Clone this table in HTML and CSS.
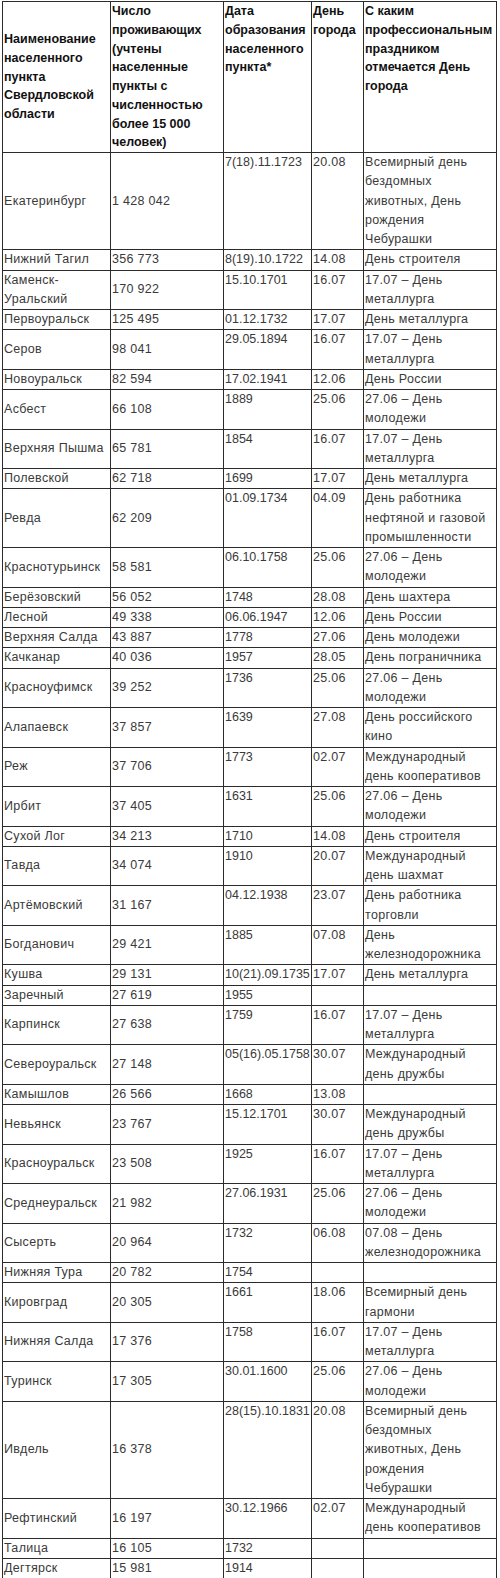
FILE: index.html
```html
<!DOCTYPE html>
<html lang="ru">
<head>
<meta charset="utf-8">
<title>Города Свердловской области</title>
<link rel="stylesheet" href="styles.css">
</head>
<body>
<table class="towns">
<colgroup>
<col class="c-name"><col class="c-pop"><col class="c-date"><col class="c-day"><col class="c-holiday">
</colgroup>
<thead>
<tr>
<th class="mid">Наименование населенного пункта Свердловской области</th>
<th>Число проживающих (учтены населенные пункты с численностью более 15 000 человек)</th>
<th>Дата образования населенного пункта*</th>
<th>День города</th>
<th>С каким профессиональным праздником отмечается День города</th>
</tr>
</thead>
<tbody>
<tr><td>Екатеринбург</td><td>1 428 042</td><td>7(18).11.1723</td><td>20.08</td><td>Всемирный день бездомных животных, День рождения Чебурашки</td></tr>
<tr><td>Нижний Тагил</td><td>356 773</td><td>8(19).10.1722</td><td>14.08</td><td>День строителя</td></tr>
<tr><td>Каменск-Уральский</td><td>170 922</td><td>15.10.1701</td><td>16.07</td><td>17.07 – День металлурга</td></tr>
<tr><td>Первоуральск</td><td>125 495</td><td>01.12.1732</td><td>17.07</td><td>День металлурга</td></tr>
<tr><td>Серов</td><td>98 041</td><td>29.05.1894</td><td>16.07</td><td>17.07 – День металлурга</td></tr>
<tr><td>Новоуральск</td><td>82 594</td><td>17.02.1941</td><td>12.06</td><td>День России</td></tr>
<tr><td>Асбест</td><td>66 108</td><td>1889</td><td>25.06</td><td>27.06 – День молодежи</td></tr>
<tr><td>Верхняя Пышма</td><td>65 781</td><td>1854</td><td>16.07</td><td>17.07 – День металлурга</td></tr>
<tr><td>Полевской</td><td>62 718</td><td>1699</td><td>17.07</td><td>День металлурга</td></tr>
<tr><td>Ревда</td><td>62 209</td><td>01.09.1734</td><td>04.09</td><td>День работника нефтяной и газовой промышленности</td></tr>
<tr><td>Краснотурьинск</td><td>58 581</td><td>06.10.1758</td><td>25.06</td><td>27.06 – День молодежи</td></tr>
<tr><td>Берёзовский</td><td>56 052</td><td>1748</td><td>28.08</td><td>День шахтера</td></tr>
<tr><td>Лесной</td><td>49 338</td><td>06.06.1947</td><td>12.06</td><td>День России</td></tr>
<tr><td>Верхняя Салда</td><td>43 887</td><td>1778</td><td>27.06</td><td>День молодежи</td></tr>
<tr><td>Качканар</td><td>40 036</td><td>1957</td><td>28.05</td><td>День пограничника</td></tr>
<tr><td>Красноуфимск</td><td>39 252</td><td>1736</td><td>25.06</td><td>27.06 – День молодежи</td></tr>
<tr><td>Алапаевск</td><td>37 857</td><td>1639</td><td>27.08</td><td>День российского кино</td></tr>
<tr><td>Реж</td><td>37 706</td><td>1773</td><td>02.07</td><td>Международный день кооперативов</td></tr>
<tr><td>Ирбит</td><td>37 405</td><td>1631</td><td>25.06</td><td>27.06 – День молодежи</td></tr>
<tr><td>Сухой Лог</td><td>34 213</td><td>1710</td><td>14.08</td><td>День строителя</td></tr>
<tr><td>Тавда</td><td>34 074</td><td>1910</td><td>20.07</td><td>Международный день шахмат</td></tr>
<tr><td>Артёмовский</td><td>31 167</td><td>04.12.1938</td><td>23.07</td><td>День работника торговли</td></tr>
<tr><td>Богданович</td><td>29 421</td><td>1885</td><td>07.08</td><td>День железнодорожника</td></tr>
<tr><td>Кушва</td><td>29 131</td><td>10(21).09.1735</td><td>17.07</td><td>День металлурга</td></tr>
<tr><td>Заречный</td><td>27 619</td><td>1955</td><td></td><td></td></tr>
<tr><td>Карпинск</td><td>27 638</td><td>1759</td><td>16.07</td><td>17.07 – День металлурга</td></tr>
<tr><td>Североуральск</td><td>27 148</td><td>05(16).05.1758</td><td>30.07</td><td>Международный день дружбы</td></tr>
<tr><td>Камышлов</td><td>26 566</td><td>1668</td><td>13.08</td><td></td></tr>
<tr><td>Невьянск</td><td>23 767</td><td>15.12.1701</td><td>30.07</td><td>Международный день дружбы</td></tr>
<tr><td>Красноуральск</td><td>23 508</td><td>1925</td><td>16.07</td><td>17.07 – День металлурга</td></tr>
<tr><td>Среднеуральск</td><td>21 982</td><td>27.06.1931</td><td>25.06</td><td>27.06 – День молодежи</td></tr>
<tr><td>Сысерть</td><td>20 964</td><td>1732</td><td>06.08</td><td>07.08 – День железнодорожника</td></tr>
<tr><td>Нижняя Тура</td><td>20 782</td><td>1754</td><td></td><td></td></tr>
<tr><td>Кировград</td><td>20 305</td><td>1661</td><td>18.06</td><td>Всемирный день гармони</td></tr>
<tr><td>Нижняя Салда</td><td>17 376</td><td>1758</td><td>16.07</td><td>17.07 – День металлурга</td></tr>
<tr><td>Туринск</td><td>17 305</td><td>30.01.1600</td><td>25.06</td><td>27.06 – День молодежи</td></tr>
<tr><td>Ивдель</td><td>16 378</td><td>28(15).10.1831</td><td>20.08</td><td>Всемирный день бездомных животных, День рождения Чебурашки</td></tr>
<tr><td>Рефтинский</td><td>16 197</td><td>30.12.1966</td><td>02.07</td><td>Международный день кооперативов</td></tr>
<tr><td>Талица</td><td>16 105</td><td>1732</td><td></td><td></td></tr>
<tr><td>Дегтярск</td><td>15 981</td><td>1914</td><td></td><td></td></tr>
</tbody>
</table>
</body>
</html>
```
FILE: styles.css
```css
html, body {
  margin: 0;
  padding: 0;
  background: #fff;
}

body {
  font-family: "Liberation Sans", Arial, sans-serif;
  font-size: 12.5px;
  line-height: 19.25px;
  color: #3a3a3a;
}

.towns {
  border-collapse: collapse;
  table-layout: fixed;
  width: 494px;
  margin: 1px 0 0 2px;
  border: 1px solid #333;
}

.c-name { width: 108px; }
.c-pop { width: 113px; }
.c-date { width: 88px; }
.c-day { width: 52px; }
.c-holiday { width: 133px; }

.towns th,
.towns td {
  border: 1px solid #2b2b2b;
  padding: 0 1px;
  text-align: left;
  vertical-align: top;
}

.towns td {
  letter-spacing: 0.3px;
}

.towns td:nth-child(3) {
  white-space: nowrap;
  letter-spacing: 0;
}

.towns th {
  font-weight: bold;
  color: #111;
  line-height: 18.75px;
  letter-spacing: 0;
}

.towns th.mid,
.towns td:nth-child(1),
.towns td:nth-child(2) {
  vertical-align: middle;
}
```
